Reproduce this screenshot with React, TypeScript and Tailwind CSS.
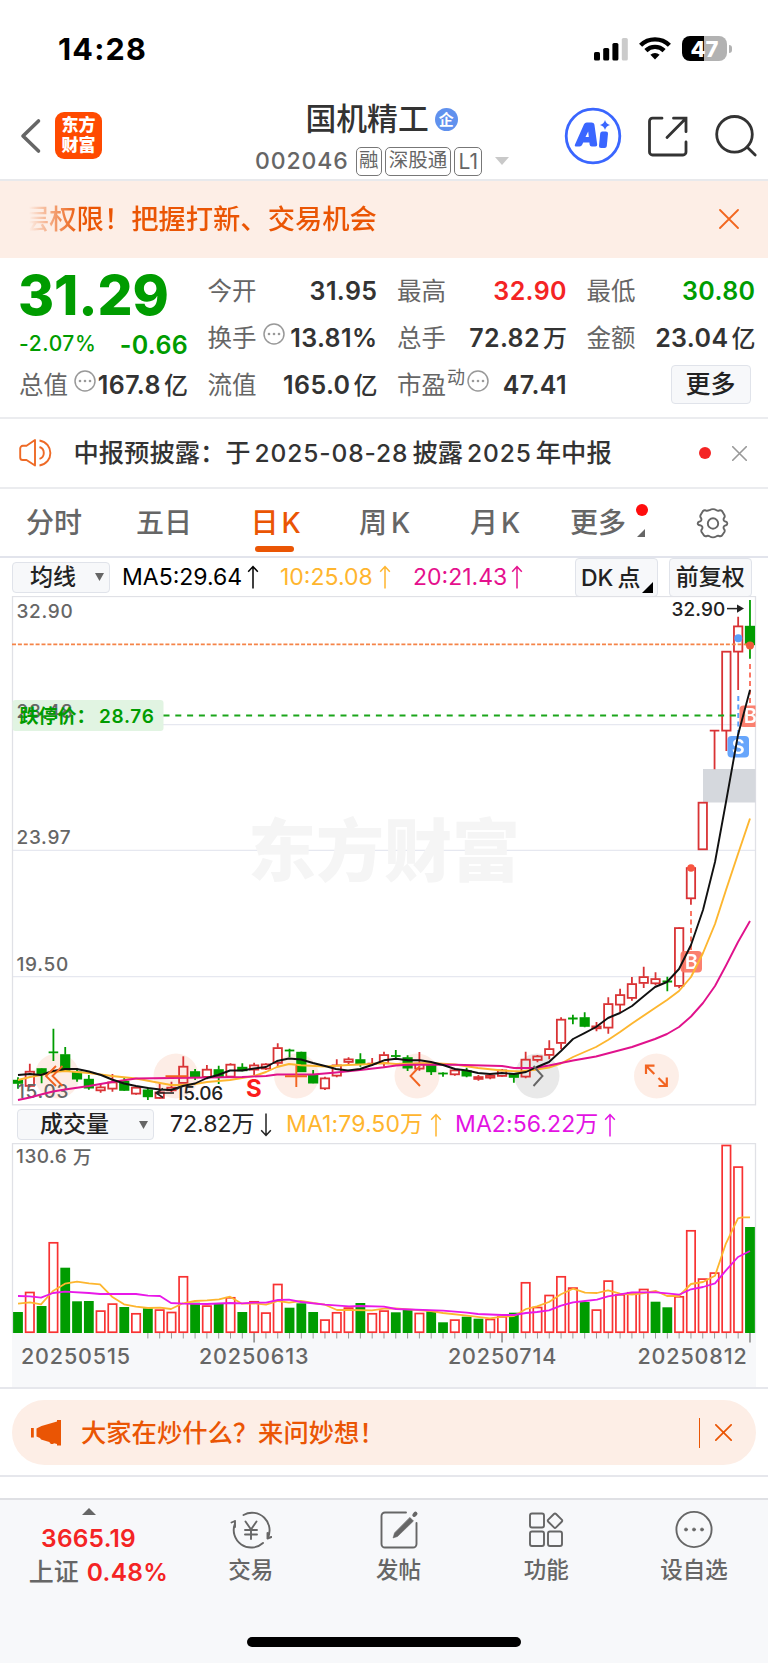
import type { ReactNode } from "react";

type Candle = [color: "r" | "g", high: number, top: number, bottom: number, low: number];

const RED = "#d93335";
const GREEN = "#009c00";
const STEP = 11.806;
const FIRST_X = 18;
const cx = (i: number) => FIRST_X + i * STEP;

const CANDLES: Candle[] = [
  ["g", 1077.3, 1080.3, 1083.3, 1088.7], ["r", 1063.7, 1071.3, 1086.3, 1087.3], ["g", 1068.3, 1068.7, 1074, 1083.3],
  ["g", 1028.7, 1052, 1052.7, 1061], ["g", 1047, 1054.7, 1071.3, 1071.3], ["g", 1070, 1072, 1079, 1081.7],
  ["g", 1075, 1079.3, 1088, 1089.7], ["r", 1083.3, 1087, 1090.7, 1092.7], ["r", 1074, 1082, 1089, 1091.7],
  ["g", 1077.3, 1081.3, 1090.3, 1091], ["r", 1087.3, 1087.3, 1094, 1094.7], ["g", 1087.3, 1090, 1096.7, 1100],
  ["r", 1083.3, 1092, 1098.3, 1099], ["r", 1081.7, 1087.3, 1090.7, 1092], ["r", 1056.3, 1066.3, 1083.3, 1083.3],
  ["g", 1069, 1071.7, 1077.3, 1080], ["r", 1065, 1069.3, 1077.3, 1079.3], ["g", 1065.7, 1069.7, 1077.3, 1084],
  ["r", 1063.3, 1064.3, 1077, 1077.3], ["g", 1063.3, 1067.3, 1070.7, 1071.3], ["r", 1062.7, 1065, 1070, 1075],
  ["r", 1063.3, 1064, 1069, 1070], ["r", 1043.3, 1047.7, 1063.3, 1066.7], ["g", 1048.7, 1050, 1051, 1057.3],
  ["g", 1051.7, 1052.3, 1071.7, 1071.7], ["g", 1070, 1075.3, 1083, 1083.3], ["r", 1076.7, 1078, 1088.7, 1090],
  ["r", 1059.3, 1065, 1076, 1077.3], ["r", 1057.3, 1059, 1062.3, 1066], ["g", 1053.3, 1059.7, 1064.3, 1066.7],
  ["r", 1058, 1063.3, 1064, 1066], ["r", 1051.7, 1054.7, 1063.7, 1066.7], ["g", 1050, 1055.7, 1056.3, 1059.3],
  ["g", 1055.3, 1057.7, 1068, 1071], ["r", 1052, 1063.3, 1069, 1070.7], ["g", 1063.3, 1064, 1071.7, 1075],
  ["g", 1072.3, 1073, 1074, 1076.7], ["r", 1068.3, 1070, 1074.7, 1075.7], ["g", 1067.7, 1070.7, 1076, 1077.3],
  ["r", 1075, 1076.7, 1079.3, 1080.7], ["r", 1073.3, 1075.3, 1078, 1079.3], ["r", 1069, 1070, 1076.3, 1077],
  ["g", 1073.3, 1074, 1077.3, 1082.7], ["r", 1051.7, 1059.3, 1077, 1078.3], ["r", 1055, 1056, 1060.3, 1062.3],
  ["r", 1040.3, 1048.7, 1055.3, 1059.3], ["r", 1017.3, 1019.3, 1043.3, 1049.3], ["g", 1014.7, 1018, 1019, 1024.3],
  ["g", 1012.3, 1017.7, 1026.3, 1027.3], ["r", 1022, 1026, 1028.7, 1031.3], ["r", 997.3, 1003.7, 1028, 1033.7],
  ["r", 988.7, 994.7, 1005, 1012], ["r", 977, 983.7, 998.3, 1000.7], ["r", 966.7, 976.7, 983.3, 988],
  ["r", 972.3, 978.7, 983.7, 985.3], ["g", 976.7, 981, 982, 991.3], ["r", 927.3, 927.7, 986.3, 988.3],
  ["r", 867.7, 867.7, 898.7, 904.7], ["r", 802.3, 802.3, 849.7, 849.7], ["r", 730.7, 730.7, 730.7, 769.3],
  ["r", 651.3, 651.3, 731, 751], ["r", 616.7, 626, 652, 690], ["g", 600, 626.3, 644.7, 658.7],
];

// volume bar heights; negative means a falling day
const VOLUMES = [
  -21, 41.3, -27, 91, -65.3, -31.7, -32, 22.7, 29.7, -26, 20, -24.7, 23.7, 21.3, 57, -30.3, 27.7, -29, 36, -21, 32,
  20.7, 49.3, -25.3, -29.7, -21, 13.7, 21, 25.7, -30, 20, 22.7, -20.7, -23.7, 20.3, -21.7, -10.7, 13.7, -16.3, -14.3,
  14.3, 17, -20.3, 51, 26.3, 38.3, 57, 45.7, -31, 23.7, 52.7, 39, 41, 44.3, -31.3, -25.7, 37, 103, 54.7, 60.7, 188.3,
  166.7, -106,
];

const MA5 = "18,1075 30,1074 41,1075 53,1071 65,1069 77,1069 89,1071.5 101,1075 112,1079.5 124,1083.5 136,1086 148,1088 160,1089.5 171,1090 183,1086 195,1083.5 207,1078 218,1075 230,1070.5 242,1070.5 254,1068.5 266,1067 277,1061 289,1058.5 301,1059.5 313,1063 325,1066 336,1069 348,1070.5 360,1069 372,1065 384,1060.3 396,1058.7 408,1060.3 420,1060.3 431,1062 443,1065 455,1069 467,1070.5 478,1073 490,1074 502,1073 514,1074 526,1072 537,1067 549,1062 561,1051 573,1039 584,1033.3 596,1027 608,1018 620,1013 632,1006 644,996 655,987 667,982 679,969 691,945 703,910 715,862 726,802 738,735 750,690";
const MA10 = "18,1080 30,1077 41,1075 53,1072 65,1071 89,1073 112,1076 136,1078.5 160,1083 171,1085 183,1085 195,1084 207,1082 230,1080 254,1076 266,1072 277,1067 289,1064 301,1065.3 325,1066.5 348,1065 372,1064 384,1063 396,1064 431,1063 455,1064.5 478,1068 502,1070.5 520,1071.5 537,1069.5 549,1067.5 561,1063.5 573,1057 596,1047 608,1040 620,1032 632,1023.5 655,1008 667,1000 679,991 691,977 703,953 715,924 726,890 738,854 750,818.5";
const MA20 = "18,1100 30,1097.5 41,1094.5 53,1091.5 65,1089.5 89,1086 112,1082 136,1078.5 171,1078 207,1077.5 242,1077 266,1076 277,1074.5 313,1074.5 336,1072.5 360,1070 384,1067.3 396,1065.5 408,1064.7 455,1064.7 502,1066 514,1068 535,1068 549,1065.5 573,1060.5 596,1056.5 632,1047 655,1039 667,1034 679,1027 691,1016.5 703,1003 715,986 726,965.5 738,942 750,921";
const VOL_MA1 = "18,1303.7 30,1302.3 41,1304.3 53,1291 65,1283.7 77,1281.7 89,1283.3 100,1284.3 112,1296.7 124,1304.3 136,1306.7 148,1308 160,1307.7 171,1309 183,1303.3 195,1301 207,1300.3 219,1299.3 230,1296.7 242,1303.7 254,1303.3 266,1304.7 278,1301 289,1302.7 301,1301 313,1303 325,1304.7 337,1310 349,1310 372,1310.3 384,1308.7 396,1308.3 408,1309.3 431,1311 443,1313 467,1315.7 490,1318.3 502,1316.7 514,1316 526,1309 537,1306.3 549,1302 561,1294.3 573,1288.7 585,1292.7 597,1293 608,1290.3 620,1293.7 632,1294.7 644,1293 656,1291 667,1296 679,1296 691,1284 703,1282 715,1275.7 726,1243.3 738,1218.3 742,1217.3 750,1217.3";
const VOL_MA2 = "18,1296 30,1296.3 41,1297.7 53,1293 65,1291.7 89,1293 100,1294 136,1294 148,1295.7 160,1296 171,1303 183,1303.7 207,1304 230,1303 242,1303.3 254,1302.7 266,1302.7 278,1300 289,1299.7 301,1302 325,1304.7 349,1306.3 360,1306 384,1306.7 396,1309 443,1310.7 467,1312.7 478,1314 502,1315 514,1315 526,1313 537,1312 549,1310.3 561,1305.7 573,1302.3 585,1301 597,1299.7 608,1296.3 620,1294.3 632,1292.3 656,1292.3 667,1293.3 679,1294.7 691,1289.3 703,1287 715,1283.3 726,1270.3 738,1257 750,1251";

const AXIS_FONT = "font-['Inter','Noto_Sans_CJK_SC',sans-serif]";

/* ---------- small pieces ---------- */
function Arrow({ down = false }: { down?: boolean }) {
  return (
    <svg width="12" height="24" viewBox="0 0 12 24" fill="none" stroke="currentColor" strokeWidth="1.5" className={down ? "rotate-180" : ""}>
      <path d="M6 23.5V1.5M1.2 6.8 6 1.5l4.8 5.3"/>
    </svg>
  );
}

function Close({ size, width = 1.8 }: { size: number; width?: number }) {
  return (
    <svg width={size} height={size} viewBox="0 0 20 20" fill="none" stroke="currentColor" strokeWidth={width} strokeLinecap="round">
      <path d="M1 1l18 18M19 1L1 19"/>
    </svg>
  );
}

function Hint() {
  return (
    <svg width="22" height="22" viewBox="0 0 22 22" fill="none" className="shrink-0 text-[#999]">
      <circle cx="11" cy="11" r="10" stroke="currentColor" strokeWidth="1.5"/>
      <circle cx="6" cy="11" r="1.3" fill="currentColor"/><circle cx="11" cy="11" r="1.3" fill="currentColor"/><circle cx="16" cy="11" r="1.3" fill="currentColor"/>
    </svg>
  );
}

function Stat({ label, hint, sup, value, unit, tone = "text-[#333]" }: { label: string; hint?: boolean; sup?: string; value: string; unit?: string; tone?: string }) {
  return (
    <div className="flex h-[47px] items-center justify-between whitespace-nowrap">
      <div className="flex items-center">
        <span className="text-[24.5px] text-[#666]">{label}</span>
        {sup && <span className="-mt-4 ml-[1px] text-[18px] text-[#666]">{sup}</span>}
        {hint && <span className={sup ? "-mt-[9px] ml-[2px]" : "-mt-[9px] ml-[6px]"}><Hint/></span>}
      </div>
      <div className={`flex items-center gap-[3px] ${tone}`}>
        <span className="text-[25px] font-semibold tracking-[0.4px]">{value}</span>
        {unit && <span className="text-[24px] font-medium">{unit}</span>}
      </div>
    </div>
  );
}

/* ---------- header ---------- */
function StatusBar() {
  return (
    <div className="flex h-[92px] items-start pl-[58px]">
      <div className="mt-[31px] text-[30.5px] font-bold leading-[36px] tracking-[1.2px] text-black">14:28</div>
      <svg width="34" height="23" viewBox="0 0 34 23" className="mt-[37.5px] ml-auto">
        <rect x="0" y="14" width="6" height="8.5" rx="1.6"/><rect x="9.2" y="10" width="6" height="12.5" rx="1.6"/>
        <rect x="18.4" y="5" width="6" height="17.5" rx="1.6"/><rect x="27.8" y="0" width="6" height="22.5" rx="1.6" fill="#cbcbcb"/>
      </svg>
      <svg width="32" height="24" viewBox="0 0 32 24" className="mt-[36px] ml-[11px]" fill="none" stroke="#000" strokeWidth="4.4">
        <path d="M1.6 9.2a20.6 20.6 0 0 1 28.8 0"/>
        <path d="M6.9 14.6a13 13 0 0 1 18.2 0"/>
        <path d="M16 23.6l-4.6-4.8a6.6 6.6 0 0 1 9.2 0z" fill="#000" stroke="none"/>
      </svg>
      <div className="mt-[36px] ml-[11px] mr-[36px] flex items-center">
        <div className="flex h-[25px] w-[45px] items-center justify-center rounded-[8px] bg-[linear-gradient(90deg,#000_49%,#b2b2b2_49%)] text-[22px] font-extrabold leading-none text-white">47</div>
        <div className="ml-[2px] h-[8px] w-[3px] rounded-r-full bg-[#b2b2b2]"/>
      </div>
    </div>
  );
}

function Tag({ children }: { children: ReactNode }) {
  return <span className="flex h-[29px] items-center rounded-[5px] border-[1.5px] border-[#777] px-[2.4px] text-[19.5px] leading-none text-[#666]">{children}</span>;
}

function NavBar() {
  return (
    <div className="flex h-[87px] items-start">
      <svg width="22" height="36" viewBox="0 0 22 36" fill="none" stroke="#666" strokeWidth="3.6" strokeLinecap="round" strokeLinejoin="round" className="mt-[26px] ml-[20px]">
        <path d="M18.5 3 3 18l15.500 15"/>
      </svg>
      <div className="mt-[20px] ml-[13px] flex size-[47px] flex-col items-center justify-center rounded-[9px] bg-[#ff4a00] text-[17px] font-black leading-[19.500px] text-white">
        <span>东方</span><span>财富</span>
      </div>
      <div className="ml-[153px] flex w-[256px] flex-col">
        <div className="mt-[5.500px] ml-[50.500px] flex h-[44px] items-center">
          <span className="text-[30.800px] font-medium leading-none text-[#333]">国机精工</span>
          <span className="ml-[6px] flex size-[23px] items-center justify-center rounded-full bg-[#6091ee] text-[15px] font-bold leading-none text-white">企</span>
        </div>
        <div className="mt-[5px] flex h-[29px] items-center gap-[3.5px]">
          <span className="mr-[5px] w-[92px] text-[23px] font-medium tracking-[0.9px] text-[#666]">002046</span>
          <Tag>融</Tag><Tag>深股通</Tag><Tag><span className="px-[1px] text-[21px]">L1</span></Tag>
          <svg width="14" height="8" viewBox="0 0 14 8" className="ml-[9px] shrink-0"><path d="M0 0h14L7 8z" fill="#c9c9c9"/></svg>
        </div>
      </div>
      <svg width="58" height="58" viewBox="0 0 58 58" className="mt-[15px] ml-[52.500px]">
        <circle cx="29" cy="29" r="26.800" fill="none" stroke="#3a66ff" strokeWidth="2.800"/>
        <path d="M11 37.500 20 17.200q.8-1.800 2.800-1.800h4.800q2.400 0 2.800 2.200l2.800 19.900q.2 2-1.800 2h-3.600q-2 0-2.200-2l-.2-2h-6.200l-.9 2q-.8 2-2.800 2h-3q-2.400 0-1.500-2zM21.500 30h3.300l-.6-5.500z" fill="#3a66ff"/>
        <path d="M38.300 24.500h3.500q2.400 0 2.200 2.200l-1.200 12.300q-.2 2-2.200 2h-3.600q-2.200 0-2-2.200l1.200-12.300q.2-2 2.100-2z" fill="#3a66ff"/>
        <path d="M41 13q1 4 5 5-4 1-5 5-1-4-5-5 4-1 5-5z" fill="#3a66ff"/>
      </svg>
      <svg width="42" height="42" viewBox="0 0 42 42" fill="none" stroke="#333" strokeWidth="2.800" strokeLinecap="round" className="mt-[22.500px] ml-[25px]">
        <path d="M15 3.200H5.500a3 3 0 0 0-3 3V37a3 3 0 0 0 3 3H36a3 3 0 0 0 3-3V27M26.500 3.200H39v13.500M38.500 3.700 20 22.500"/>
      </svg>
      <svg width="44" height="44" viewBox="0 0 44 44" fill="none" stroke="#333" strokeWidth="2.800" strokeLinecap="round" className="mt-[22px] ml-[26px]">
        <circle cx="19.500" cy="20.300" r="17.800"/><path d="M32 33l8.200 8"/>
      </svg>
    </div>
  );
}

function Banner() {
  return (
    <div className="flex h-[79px] items-center border-t-2 border-[#e8e9ec] bg-[#fdeee6] pl-[22px] pr-[29.500px]">
      <span className="mt-[2px] bg-[linear-gradient(90deg,rgba(234,85,4,0)_7px,rgba(234,85,4,0.400)_26px,#ea5504_58px)] bg-clip-text text-[27.300px] text-transparent font-medium">层权限！把握打新、交易机会</span>
      <span className="ml-auto -mt-[2px] text-[#f2671f]"><Close size={20}/></span>
    </div>
  );
}

/* ---------- quote ---------- */
function Quote() {
  return (
    <div className="grid h-[161px] grid-cols-[169px_170px_170px_169px] gap-x-[19.500px] border-b-2 border-[#ebecef] pl-[19px] pt-[10px] leading-none">
      <div>
        <div className="h-[56px] -ml-[1px] text-[55px] font-extrabold leading-[54px] tracking-[-0.100px] text-[#009c00]">31.29</div>
        <div className="flex h-[38px] items-center justify-between font-medium text-[#009c00]">
          <span className="text-[21px] tracking-[0.600px]">-2.07%</span><span className="mt-[5px] text-[25px] font-semibold tracking-[0.300px]">-0.66</span>
        </div>
        <Stat label="总值" hint value="167.8" unit="亿"/>
      </div>
      <div><Stat label="今开" value="31.95"/><Stat label="换手" hint value="13.81%"/><Stat label="流值" value="165.0" unit="亿"/></div>
      <div><Stat label="最高" value="32.90" tone="text-[#f42424]"/><Stat label="总手" value="72.82" unit="万"/><Stat label="市盈" sup="动" hint value="47.41"/></div>
      <div>
        <Stat label="最低" value="30.80" tone="text-[#009c00]"/><Stat label="金额" value="23.04" unit="亿"/>
        <button className="mt-[3px] mr-[5px] ml-auto flex h-[38.500px] w-[80px] items-center justify-center rounded-[4px] border-[1.500px] border-[#e0e3ea] bg-[#f7f8fa] text-[25px] font-medium text-[#222]">更多</button>
      </div>
    </div>
  );
}

function Notice() {
  return (
    <div className="flex h-[70px] items-center border-b-2 border-[#ebecef] pl-[19px] pr-[21px] leading-none">
      <svg width="34" height="30" viewBox="0 0 34 30" fill="none" stroke="#ee6a26" strokeWidth="1.900" strokeLinejoin="round">
        <path d="M16 2v25.500L7.500 22H3.800A2.600 2.600 0 0 1 1.200 19.400v-9a2.600 2.600 0 0 1 2.600-2.600h3.700z"/>
        <path d="M20.500 9a6.200 6.200 0 0 1 0 11.800M20.500 2.500c14.500 2.500 14.500 22.500 0 25"/>
      </svg>
      <div className="ml-[20.500px] flex items-center text-[25.300px] font-medium text-[#333]">
        <span>中报预披露：于</span>
        <span className="ml-[4px] text-[24.500px] tracking-[0.900px]">2025-08-28</span>
        <span className="ml-[4px]">披露</span><span className="ml-[4px] text-[24.500px] tracking-[0.900px]">2025</span><span className="ml-[4px]">年中报</span>
      </div>
      <span className="ml-auto size-[12px] rounded-full bg-[#f42424]"/>
      <span className="ml-[21px] text-[#999]"><Close size={15} width={2.200}/></span>
    </div>
  );
}

/* ---------- tabs ---------- */
function Tabs() {
  return (
    <div className="flex h-[69px] items-center border-b-2 border-[#e2e4ec] pl-[26px] text-[28px] font-medium leading-none text-[#666]">
      <span className="w-[110px]">分时</span>
      <span className="w-[114.500px]">五日</span>
      <span className="relative w-[108.500px] text-[#ea5504]">
        日<span className="ml-[3px]">K</span>
        <i className="absolute top-[37px] left-[4.500px] h-[6px] w-[39px] rounded-full bg-[#ea5504]"/>
      </span>
      <span className="w-[111px]">周<span className="ml-[4px]">K</span></span>
      <span className="w-[100px]">月<span className="ml-[3px]">K</span></span>
      <span className="relative w-[118px]">
        更多
        <i className="absolute -top-[5px] left-[66px] size-[12px] rounded-full bg-[#ff0d0d]"/>
        <svg width="8" height="8" viewBox="0 0 8 8" className="absolute top-[20px] left-[67px]"><path d="M8 0v8H0z" fill="#666"/></svg>
      </span>
      <svg width="34" height="32" viewBox="0 0 34 32" fill="none" stroke="#666" strokeWidth="1.900" strokeLinejoin="round" className="ml-[8px]">
        <path d="M13.500 3.200q3.500-2.200 7 0 1.200.8 2.600.3 1.700-.7 2.900.5l2.400 4q.8 1.600-.3 2.900-.9 1.200-.3 2.500.6 1 2.200 1.300 1.300.4 1.300 1.800t-1.300 1.800q-1.600.3-2.200 1.300-.6 1.300.3 2.500 1.100 1.300.3 2.900l-2.400 3.500q-1.200 1.200-2.900.5-1.400-.5-2.600.3-3.500 2.200-7 0-1.200-.8-2.600-.3-1.700.7-2.900-.5l-2.400-3.500q-.8-1.600.3-2.900.9-1.200.3-2.500-.6-1-2.200-1.300Q1.700 18 1.700 16.500t1.300-1.800q1.600-.3 2.200-1.300.6-1.300-.3-2.500-1.100-1.300-.3-2.900L7 4q1.200-1.200 2.900-.5 1.400.5 3.600-.3z"/>
        <circle cx="17" cy="16.500" r="5.200"/>
      </svg>
    </div>
  );
}

const dropBox = "flex h-[31px] items-center rounded-[4px] border-[1.5px] border-[#e0e3ea] bg-[#f7f8fa] font-medium text-[#222]";

function MaRow() {
  return (
    <div className="flex h-[38px] items-center pl-[12px] text-[23px] leading-none whitespace-nowrap">
      <div className={`${dropBox} w-[98px] pl-[17px]`}>均线<svg width="9" height="8" viewBox="0 0 9 8" className="ml-auto mr-[5px]"><path d="M0 0h9L4.500 8z" fill="#666"/></svg></div>
      <div className="ml-[12px] flex w-[158px] items-center text-black"><span className="w-[125px]">MA5:29.64</span><Arrow/></div>
      <div className="flex w-[133px] items-center text-[#ffb52e]"><span className="w-[99px]">10:25.08</span><Arrow/></div>
      <div className="flex w-[162px] items-center text-[#e5108d]"><span className="w-[98px]">20:21.43</span><Arrow/></div>
      <div className="flex h-[39px] w-[82.500px] items-end rounded-[4px] border-[1.500px] border-[#e0e3ea] bg-[#f7f8fa] pl-[5px] pb-[6px] font-medium text-[#222]">
        DK<span className="ml-[4px]">点</span><svg width="11" height="11" viewBox="0 0 11 11" className="ml-[2px] -mb-[3px]"><path d="M11 0v11H0z"/></svg>
      </div>
      <div className="ml-[11.500px] flex h-[39px] w-[82.500px] items-center justify-center rounded-[4px] border-[1.500px] border-[#e0e3ea] bg-[#f7f8fa] font-medium text-[#222]">前复权</div>
    </div>
  );
}

/* ---------- charts ---------- */
function CandleShape({ i, candle }: { i: number; candle: Candle }) {
  const [color, high, top, bottom, low] = candle;
  const x = cx(i);
  const stroke = color === "r" ? RED : GREEN;
  const flat = bottom - top < 1.5;
  return (
    <g stroke={stroke} strokeWidth="1.8">
      <path d={`M${x} ${high}V${top}M${x} ${bottom}V${low}`}/>
      {flat
        ? <path d={`M${x - 4.8} ${(top + bottom) / 2}h9.6`}/>
        : <rect x={x - 4.2} y={top + 0.4} width="8.4" height={Math.max(bottom - top - 0.8, 1)} fill={color === "r" ? "none" : GREEN}/>}
    </g>
  );
}

function Badge({ x, y, letter, fill }: { x: number; y: number; letter: string; fill: string }) {
  return (
    <g opacity="0.93">
      <rect x={x} y={y} width="21.5" height="21.5" rx="4" fill={fill}/>
      <text x={x + 10.75} y={y + 17.8} textAnchor="middle" fontSize="20" fontWeight="600" fill="#fff">{letter}</text>
    </g>
  );
}

function PriceChart() {
  return (
    <svg width="768" height="510" viewBox="0 596 768 510" className={`block ${AXIS_FONT}`} fill="none">
      <defs><clipPath id="plot"><rect x="12" y="596" width="743.5" height="509"/></clipPath></defs>
      <path d="M12.5 724.700H755M12.500 850.300H755M12.500 976.700H755" stroke="#e6e8f0" strokeWidth="1.300"/>
      <text x="248" y="876" fontSize="68" fontWeight="900" fill="#f5f5f5">东方财富</text>
      <rect x="12.500" y="596.500" width="743" height="508.300" stroke="#e0e1e6" strokeWidth="1.300"/>
      <g fill="#fdece4" opacity="0.9">
        <circle cx="57" cy="1076" r="22.500"/><circle cx="176" cy="1076" r="22.500"/><circle cx="296.500" cy="1076" r="22.500"/>
        <circle cx="417" cy="1076" r="22.500"/><circle cx="656.500" cy="1076" r="22.500"/>
      </g>
      <circle cx="537" cy="1076" r="22.500" fill="#e9e9e9"/>
      <rect x="703" y="769" width="52.500" height="33.500" fill="#d5d8dd"/>

      <g clipPath="url(#plot)">
        {CANDLES.map((c, i) => <CandleShape key={i} i={i} candle={c}/>)}
        <circle cx="738.300" cy="638.300" r="4" fill="#5b9ffb"/>
        <circle cx="691" cy="868" r="3.800" fill="#f95540"/>
        <path d="M691 911V951M750 664V706" stroke="#fb7765" strokeWidth="2" strokeDasharray="5 3.500"/>
        <path d="M738.300 696V736" stroke="#5b9ffb" strokeWidth="2" strokeDasharray="5 3.500"/>
      </g>

      <path d="M12 644.300H755" stroke="#f58448" strokeWidth="1.800" strokeDasharray="4 1.900"/>
      <rect x="12.500" y="700" width="151" height="31" rx="3" fill="#e1f4e2"/>
      <path d="M163.500 715.600H755" stroke="#1ba51b" strokeWidth="2" strokeDasharray="6 5.800"/>
      <circle cx="750" cy="645.500" r="4" fill="#ee5a3a"/>
      <g fontSize="19" fontWeight="500" fill="#666" letterSpacing="0.700">
        <text x="16.500" y="617.700">32.90</text><text x="16.500" y="717.500">28.48</text><text x="16.500" y="844">23.97</text>
        <text x="16.500" y="970.500">19.50</text><text x="17" y="1097.500">15.03</text>
      </g>
      <text x="19.500" y="722.500" fontSize="19" fontWeight="600" fill="#009c00">跌停价：</text>
      <text x="99" y="722.700" fontSize="19" fontWeight="600" fill="#009c00" letterSpacing="0.700">28.76</text>

      <g clipPath="url(#plot)">
        <Badge x={727.500} y={736} letter="S" fill="#5b9ffb"/>
        <Badge x={739.500} y={705.500} letter="B" fill="#fb7765"/>
        <Badge x={680.500} y={951} letter="B" fill="#fb7765"/>
      </g>
      <g strokeWidth="1.900" strokeLinejoin="round">
        <polyline points={MA10} stroke="#fdb62f"/>
        <polyline points={MA20} stroke="#e0128c"/>
        <polyline points={MA5} stroke="#111"/>
      </g>

      <text x="671.500" y="615.500" fontSize="19" fill="#222" letterSpacing="0.100" fontWeight="500">32.90</text>
      <path d="M727 608.600h11" stroke="#222" strokeWidth="1.500"/><path d="M737 604.500l7 4.100-7 4.100z" fill="#222"/>
      <text x="175.500" y="1100" fontSize="19" fill="#222" fontWeight="500" letterSpacing="-0.200">15.06</text>
      <path d="M157 1093h17M163 1088.500l-7 4.500 7 4.500" stroke="#222" strokeWidth="1.500"/>
      <text x="246" y="1096.700" fontSize="24" fontWeight="700" fill="#fb1c1c">S</text>

      <g stroke="#f26421" strokeWidth="1.900">
        <path d="M56 1066l-10 10 10 10M62.500 1066l-10 10 10 10M165.500 1076.300h22M285 1076.300h22M296.300 1065.500v21.500M420 1066l-9.500 10 9.500 10"/>
        <path d="M646 1074V1065.700h8.500M646.300 1066l8 8M658.500 1086h8.300v-8.500M666.500 1086l-8-8" strokeWidth="2.200"/>
      </g>
      <path d="M533.500 1066l9 10-9 10" stroke="#666" strokeWidth="1.900"/>
    </svg>
  );
}

function VolumeRow() {
  return (
    <div className="flex h-[37px] items-center pl-[17px] text-[23px] leading-none whitespace-nowrap">
      <div className={`${dropBox} w-[137px] pl-[22px]`}>成交量<svg width="9" height="8" viewBox="0 0 9 8" className="ml-auto mr-[5px]"><path d="M0 0h9L4.500 8z" fill="#666"/></svg></div>
      <div className="ml-[16px] flex w-[116px] items-center text-[#222]"><span className="w-[90px]">72.82万</span><Arrow down/></div>
      <div className="flex w-[169px] items-center text-[#ffb52e]"><span className="w-[144px] tracking-[0.100px]">MA1:79.50万</span><Arrow/></div>
      <div className="flex items-center text-[#e312e3]"><span className="w-[149px] tracking-[0.100px]">MA2:56.22万</span><Arrow/></div>
    </div>
  );
}

function VolumeChart() {
  return (
    <svg width="768" height="244" viewBox="0 1143 768 244" className={`block ${AXIS_FONT}`} fill="none">
      <rect x="12" y="1333" width="744" height="55" fill="#f7f8fa"/>
      <path d="M12.500 1333V1143.500H755.500V1333" stroke="#e0e1e6" strokeWidth="1.300"/>
      {VOLUMES.map((v, i) => v < 0
        ? <rect key={i} x={cx(i) - 4.9} y={1333 + v} width="9.8" height={-v} fill={GREEN}/>
        : <rect key={i} x={cx(i) - 4.2} y={1333.8 - v} width="8.4" height={v - 1.6} stroke="#f83232" strokeWidth="1.700"/>)}
      {VOLUMES.map((_, i) => i > 10 && (
        <path key={i} d={`M${cx(i)} 1333v${i === 20 || i === 41 || i === 62 ? 9.500 : 5.500}`} stroke="#999" strokeWidth={i === 20 || i === 41 || i === 62 ? 1.800 : 1}/>
      ))}
      <g strokeWidth="1.800" strokeLinejoin="round">
        <polyline points={VOL_MA1} stroke="#fdb62f"/><polyline points={VOL_MA2} stroke="#e818e8"/>
      </g>
      <g fontWeight="500" fill="#666">
        <text x="16" y="1163.300" fontSize="19" letterSpacing="0.500">130.6</text><text x="73" y="1163.500" fontSize="18.500">万</text>
        <g fontSize="21.500" letterSpacing="0.850">
          <text x="21" y="1363.700">20250515</text><text x="199" y="1363.700">20250613</text>
          <text x="448" y="1363.700">20250714</text><text x="637.500" y="1363.700">20250812</text>
        </g>
      </g>
    </svg>
  );
}

/* ---------- bottom ---------- */
function AskBar() {
  return (
    <div className="h-[90px] border-t-2 border-b-2 border-[#e6e7ec] px-[12px] pt-[11px]">
      <div className="flex h-[65px] items-center rounded-full bg-[#fdeee6] pl-[19px] pr-[24px] text-[#ea5504]">
        <svg width="31" height="27" viewBox="0 0 31 27" fill="currentColor">
          <path d="M0 9h2.800v9.500H0zM5.500 9.500 10.500 7 26 2.500V1h4v25.500h-4V25l-3-.8c-1.500 1.500-4 1-4.500-1.200l-1-.2-7.500-2.200-1-1.500L5.500 17.500z"/>
        </svg>
        <span className="ml-[19px] text-[25.300px] font-medium">大家在炒什么？来问妙想！</span>
        <i className="ml-auto h-[30px] w-[1.500px] bg-[#ea5504]"/>
        <span className="ml-[15px]"><Close size={17} width={2}/></span>
      </div>
    </div>
  );
}

function BarItem({ label, children }: { label: string; children: ReactNode }) {
  return (
    <div className="flex w-[148px] flex-col items-center pt-[10px]">
      <svg width="42" height="40" viewBox="0 0 42 40" fill="none" stroke="#666" strokeWidth="1.900" strokeLinecap="round" strokeLinejoin="round">{children}</svg>
      <span className="mt-[8px] text-[22.500px] leading-[24px] text-[#666] font-medium">{label}</span>
    </div>
  );
}

function BottomBar() {
  return (
    <div className="mt-[21px] flex h-[165px] flex-col border-t-2 border-[#dfe0e4] bg-[#f7f8fa]">
      <div className="flex h-[100px]">
        <div className="flex w-[177px] shrink-0 flex-col items-center text-[24.500px] font-semibold leading-none text-[#f42424]">
          <svg width="14" height="7" viewBox="0 0 14 7" className="mt-[8px]"><path d="M7 0l7 7H0z" fill="#666"/></svg>
          <span className="mt-[11px] tracking-[0.200px]">3665.19</span>
          <div className="mt-[9px] flex items-center gap-[8px] pl-[20px]"><span className="text-[25px] font-medium text-[#666]">上证</span><span className="tracking-[0.300px]">0.48%</span></div>
        </div>
        <BarItem label="交易">
          <path d="M13.500 5A17.500 17.500 0 0 1 37.500 28.500M37.500 28.500v-5.500M37.500 28.500l3.800-1.500M33 33A17.500 17.500 0 0 1 5 13.500M5 11v6M5 11 1.500 12.500"/>
          <path d="M15.500 11.500 21 19.500l5.500-8M21 19.500V29M15 20h12M15 24.500h12"/>
        </BarItem>
        <BarItem label="发帖">
          <path d="M28 2.500H7A3.500 3.500 0 0 0 3.500 6v28A3.500 3.500 0 0 0 7 37.500h28a3.500 3.500 0 0 0 3.500-3.500V13"/>
          <path d="M32 7.500l3.500 3.500-16 15.500-4.500 1.500 1.500-5z" fill="#666" strokeWidth="0.500"/><path d="M37.500 3.700 36.300 5" strokeWidth="4"/>
        </BarItem>
        <BarItem label="功能">
          <rect x="5" y="3.500" width="14" height="14" rx="2"/><rect x="5" y="21.500" width="14" height="14.500" rx="2"/>
          <rect x="23" y="21.500" width="14" height="14.500" rx="2"/>
          <rect x="24.500" y="5.200" width="11" height="11" rx="1.500" transform="rotate(45 30 10.700)"/>
        </BarItem>
        <BarItem label="设自选">
          <circle cx="21" cy="19.500" r="17.600"/>
          <g fill="#666" strokeWidth="0.600"><circle cx="13" cy="19.500" r="1.600"/><circle cx="21" cy="19.500" r="1.600"/><circle cx="29" cy="19.500" r="1.600"/></g>
        </BarItem>
      </div>
      <div className="mt-[37px] mx-auto h-[10px] w-[274px] rounded-full bg-black"/>
    </div>
  );
}

export default function App() {
  return (
    <div className="h-[1663px] w-[768px] overflow-hidden bg-white font-['Inter','Noto_Sans_CJK_SC',sans-serif]">
      <StatusBar/>
      <NavBar/>
      <Banner/>
      <Quote/>
      <Notice/>
      <Tabs/>
      <MaRow/>
      <PriceChart/>
      <VolumeRow/>
      <VolumeChart/>
      <AskBar/>
      <BottomBar/>
    </div>
  );
}
